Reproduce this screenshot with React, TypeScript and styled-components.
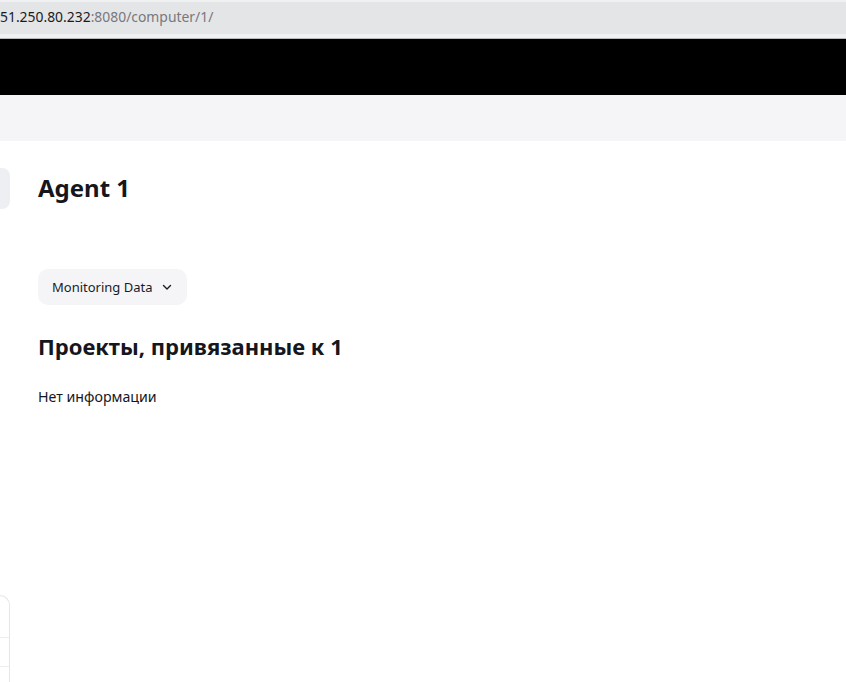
import React from "react";
import styled, { createGlobalStyle } from "styled-components";

const Global = createGlobalStyle`
  html, body { margin: 0; padding: 0; background: #ffffff; }
  body { font-family: "Noto Sans", "Open Sans", sans-serif; color: #16161d; overflow: hidden; }
`;

const Page = styled.div`
  width: 846px;
  height: 682px;
  display: flex;
  flex-direction: column;
  overflow: hidden;
`;

const BrowserBar = styled.div`
  height: 39px;
  background: #f0f1f2;
  display: flex;
  flex-direction: column;
  border-bottom: 1px solid #b9b9bb;
  box-sizing: border-box;
`;

const UrlField = styled.div`
  margin-top: 2px;
  height: 32px;
  background: #e4e5e7;
  display: flex;
  align-items: center;
  font-size: 13.9px;
  line-height: 20px;
  padding-bottom: 3px;
  box-sizing: border-box;
  color: #1b1b1d;
`;

const UrlHost = styled.span`
  color: #1b1b1d;
`;

const UrlPath = styled.span`
  color: #78787c;
`;

const TopNav = styled.div`
  height: 56px;
  background: #000000;
`;

const SubNav = styled.div`
  height: 46px;
  background: #f5f5f7;
`;

const Body = styled.div`
  flex: 1;
  display: flex;
`;

const Sidebar = styled.div`
  width: 10px;
  display: flex;
  flex-direction: column;
  justify-content: space-between;
  padding-top: 27px;
`;

const SideItem = styled.div`
  height: 41px;
  background: #eeeff3;
  border-radius: 0 8px 8px 0;
`;

const SideCard = styled.div`
  height: 87px;
  border: 1.5px solid #e5e5ee;
  border-left: none;
  border-bottom: none;
  border-radius: 0 10px 0 0;
  display: flex;
  flex-direction: column;
  padding-top: 41px;
  gap: 28px;
  box-sizing: border-box;
`;

const SideRule = styled.div`
  height: 1px;
  background: #ececf2;
`;

const Main = styled.main`
  flex: 1;
  padding: 31px 0 0 28px;
  display: flex;
  flex-direction: column;
  align-items: flex-start;
`;

const Title = styled.h1`
  margin: 0;
  font-size: 24px;
  font-weight: 700;
  line-height: 32px;
  color: #16161d;
`;

const Dropdown = styled.button`
  margin-top: 65px;
  height: 36px;
  padding: 0 14px 0 14px;
  border: none;
  border-radius: 10px;
  background: #f5f5f7;
  display: flex;
  align-items: center;
  gap: 8px;
  font-family: "Noto Sans", sans-serif;
  font-size: 13px;
  color: #1b1b24;
  cursor: pointer;
`;

const SectionTitle = styled.h2`
  margin: 26px 0 0 0;
  font-size: 22px;
  font-weight: 700;
  line-height: 30px;
  color: #16161d;
`;

const Empty = styled.p`
  margin: 26px 0 0 0;
  font-size: 14.2px;
  line-height: 20px;
  color: #16161d;
`;

const Chevron = () => (
  <svg width="12" height="12" viewBox="0 0 12 12" fill="none">
    <path d="M2.5 4.5 L6 8 L9.5 4.5" stroke="#1b1b24" strokeWidth="1.4" strokeLinecap="round" strokeLinejoin="round" />
  </svg>
);

export default function App() {
  return (
    <Page>
      <Global />
      <BrowserBar>
        <UrlField>
          <UrlHost>51.250.80.232</UrlHost>
          <UrlPath>:8080/computer/1/</UrlPath>
        </UrlField>
      </BrowserBar>
      <TopNav />
      <SubNav />
      <Body>
        <Sidebar>
          <SideItem />
          <SideCard>
            <SideRule />
            <SideRule />
          </SideCard>
        </Sidebar>
        <Main>
          <Title>Agent 1</Title>
          <Dropdown>
            Monitoring Data
            <Chevron />
          </Dropdown>
          <SectionTitle>Проекты, привязанные к 1</SectionTitle>
          <Empty>Нет информации</Empty>
        </Main>
      </Body>
    </Page>
  );
}
